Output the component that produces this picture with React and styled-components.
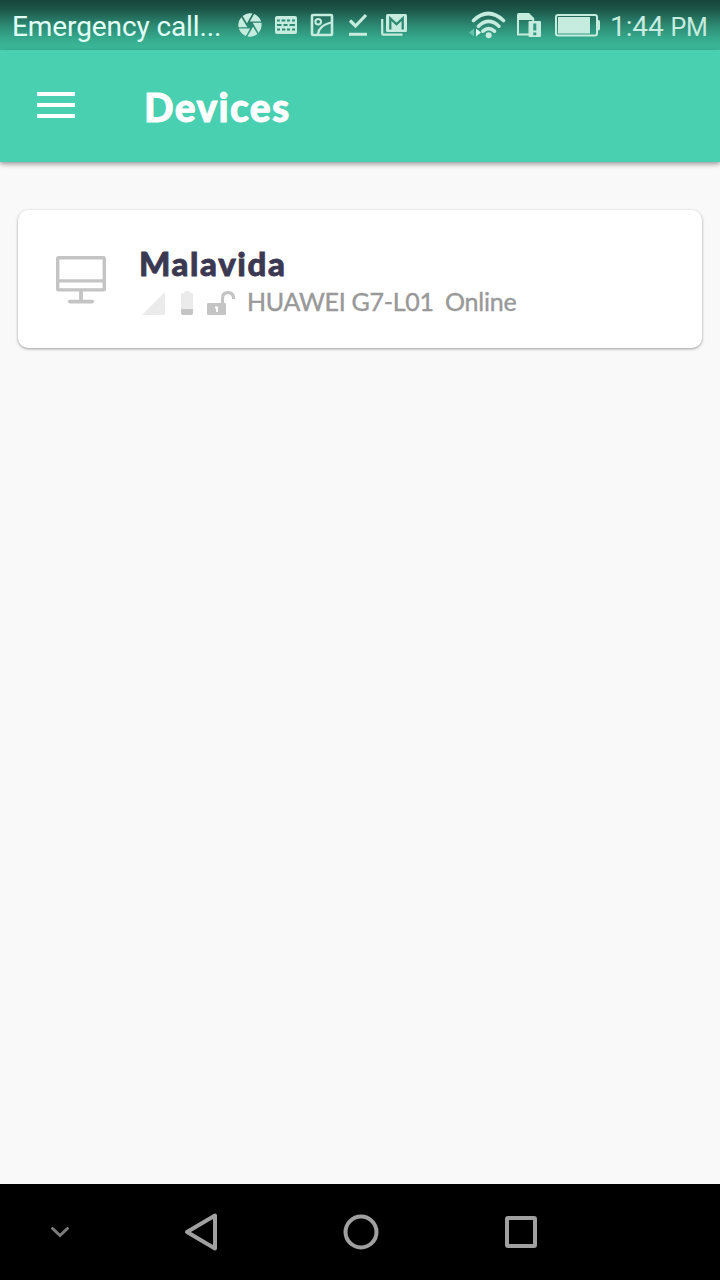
import React from "react";
import styled, { createGlobalStyle } from "styled-components";
import { MdCamera } from "react-icons/md";

const App = () => {
	return (
		<Screen>
			<GlobalStyle />
			<StatusBar>
				<Carrier>Emergency call...</Carrier>
				<Notifications>
					<MdCamera size={28} />
					<KeyboardIcon />
					<PictureIcon />
					<DoneIcon />
					<MailIcon />
				</Notifications>
				<SystemIcons>
					<WifiIcon />
					<SimIcon />
					<BatteryIcon />
				</SystemIcons>
				<Clock>
					1:44 <small>PM</small>
				</Clock>
			</StatusBar>
			<AppBar>
				<MenuButton aria-label="Menu">
					<span />
					<span />
					<span />
				</MenuButton>
				<Title>Devices</Title>
			</AppBar>
			<Content>
				<DeviceCard name="Malavida" model="HUAWEI G7-L01" status="Online" />
			</Content>
			<NavBar>
				<NavIcons />
			</NavBar>
		</Screen>
	);
};

const DeviceCard = ({ name, model, status }) => (
	<Card>
		<MonitorIcon />
		<DeviceInfo>
			<DeviceName>{name}</DeviceName>
			<DeviceDetails>
				<DeviceStateIcons />
				<Model>{model}</Model>
				<Status>{status}</Status>
			</DeviceDetails>
		</DeviceInfo>
	</Card>
);

const KeyboardIcon = () => (
	<svg width="24" height="18" viewBox="0 0 24 18">
		<rect x="1" y="0" width="22" height="18" rx="2" fill="currentColor" />
		<path
			d="M3 4.500h2.800M7.500 4.500h3.800M13 4.500h3M18 4.500h3M3 9h4.500M9.500 9h4M15.500 9h5.500M3 13.500h3M8 13.500h3.300M13 13.500h3M18 13.500h3"
			stroke="#2c8b73"
			strokeWidth="2.2"
		/>
	</svg>
);

const PictureIcon = () => (
	<svg width="24" height="24" viewBox="0 0 24 24" fill="none" stroke="currentColor">
		<rect x="2" y="2" width="20" height="20" rx="1" strokeWidth="2.600" />
		<circle cx="8.2" cy="8.8" r="2.8" strokeWidth="2" />
		<path d="M8 21c.5-5 4.500-9.500 13-11.500" strokeWidth="2.200" />
	</svg>
);

const DoneIcon = () => (
	<svg width="20" height="24" viewBox="0 0 20 24" fill="none" stroke="currentColor">
		<path d="M2 7.500l5.500 5.500L18 2" strokeWidth="3.200" />
		<path d="M1 21.300h18" strokeWidth="3" />
	</svg>
);

const MailIcon = () => (
	<svg width="28" height="24" viewBox="0 0 28 24" fill="none">
		<path d="M2.200 6v14.500q0 1.200 1.200 1.200H22.500" stroke="currentColor" strokeWidth="2.200" />
		<rect x="6" y="1" width="21" height="18" rx="1.500" fill="currentColor" />
		<path d="M10.300 16.500V5.500l6.200 5.800 6.200-5.800v11" stroke="#2b8972" strokeWidth="2.300" />
	</svg>
);

const WifiIcon = () => (
	<svg width="38" height="28" viewBox="0 0 38 28" fill="none">
		<path
			d="M4.500 9.500q14.500-14 30 0M9.500 15.200q10.200-9.500 20.400 0M14 20.200q5.700-5 11.400 0"
			stroke="currentColor"
			strokeWidth="3.600"
			strokeLinecap="round"
		/>
		<circle cx="19.700" cy="24.300" r="3" fill="currentColor" />
		<path d="M5 17.500v8L0 21.500z" fill="#65c3aa" />
		<path d="M7 17.500v8l5-4z" fill="#e2fff5" />
	</svg>
);

const SimIcon = () => (
	<svg width="26" height="26" viewBox="0 0 26 26">
		<path d="M1 3q0-2 2-2h10l5 5v2H1z" fill="currentColor" />
		<path d="M2 7v15.500h11M17.200 6v4" fill="none" stroke="currentColor" strokeWidth="2" />
		<rect x="12.500" y="9" width="12.500" height="16" rx="1" fill="currentColor" />
		<path d="M18.800 11.500v7M18.800 20.500v2.800" stroke="#329a80" strokeWidth="3" />
	</svg>
);

const BatteryIcon = () => (
	<svg width="46" height="24" viewBox="0 0 46 24">
		<rect x="1" y="2" width="41" height="20.500" rx="2" fill="none" stroke="currentColor" strokeWidth="2" />
		<path d="M42.500 7h1q1.500 0 1.500 2v6.500q0 2-1.500 2h-1z" fill="currentColor" />
		<rect x="3" y="4" width="32" height="16.500" fill="currentColor" />
	</svg>
);

const MonitorIcon = () => (
	<svg width="50" height="48" viewBox="0 0 50 48" fill="none" stroke="#c4c4c4">
		<rect x="1.700" y="1.700" width="46.600" height="32.200" rx=".8" strokeWidth="3.400" />
		<path d="M2 24.800h46" strokeWidth="3.200" />
		<path d="M25 34v11" strokeWidth="3.800" />
		<path d="M13.700 45.600h22.600" strokeWidth="3.600" strokeLinecap="round" />
	</svg>
);

// signal strength, battery level and lock state
const DeviceStateIcons = () => (
	<svg width="96" height="26" viewBox="0 0 96 26">
		<path d="M2 25L25 2v23z" fill="#ebebeb" />
		<path d="M41 19V4q0-1 1-1h2q0-2 2-2h2q2 0 2 2h2q1 0 1 1v15z" fill="#ebebeb" />
		<path d="M41 19h12v4q0 2-2 2h-8q-2 0-2-2z" fill="#c4c4c4" />
		<rect x="67" y="13" width="19" height="12" rx="1.200" fill="#c4c4c4" />
		<path
			d="M82.500 14V8.500q0-5.800 5.500-5.800 5.700 0 5.700 6.300"
			fill="none"
			stroke="#c4c4c4"
			strokeWidth="3.200"
		/>
		<path d="M75 16.500h3V22h-2v-3.500h-1z" fill="#fff" />
	</svg>
);

const NavIcons = () => (
	<svg width="720" height="96" viewBox="0 0 720 96" fill="none" stroke="#a0a0a0" strokeWidth="4">
		<path d="M52.500 44.500l7.500 7 7.500-7" stroke="#7c7c7c" strokeWidth="3" strokeLinecap="round" />
		<path d="M187 48l28-16.500v33z" strokeLinejoin="round" />
		<circle cx="361" cy="48" r="15.500" />
		<rect x="507" y="34" width="28" height="28" rx="1" />
	</svg>
);

const GlobalStyle = createGlobalStyle`
	* {
		box-sizing: border-box;
	}
	body {
		margin: 0;
		background: #f9f9f9;
	}
	svg {
		display: block;
		flex-shrink: 0;
	}
`;

const Screen = styled.div`
	display: flex;
	flex-direction: column;
	width: 720px;
	height: 1280px;
	overflow: hidden;
	background: #f9f9f9;
	font-family: Lato, sans-serif;
	white-space: nowrap;
`;

const StatusBar = styled.header`
	display: flex;
	align-items: center;
	height: 50px;
	padding-left: 12px;
	color: #c6ebdf;
	font-family: Roboto, sans-serif;
	background: linear-gradient(#17443a, #1c5548 18%, #2c8871 50%, #36ab8e 78%, #3bbb9b);
`;

const Carrier = styled.span`
	width: 224px;
	padding-top: 3px;
	font-size: 28px;
	letter-spacing: -0.1px;
	color: #e0fff6;
`;

const Notifications = styled.div`
	display: flex;
	align-items: center;
	width: 233px;
	svg {
		margin-right: 12px;
	}
	svg:first-child {
		margin-right: 10px;
	}
	svg:nth-child(4) {
		margin-left: 2px;
	}
`;

const SystemIcons = styled.div`
	display: flex;
	align-items: center;
	column-gap: 9px;
	width: 141px;
	svg:last-child {
		margin-left: 4px;
	}
`;

const Clock = styled.time`
	padding-top: 3px;
	font-size: 28px;
	letter-spacing: -0.1px;
	small {
		font-size: 25px;
	}
`;

const AppBar = styled.div`
	display: flex;
	align-items: center;
	height: 112px;
	padding: 0 0 2px 37px;
	color: #fff;
	background: #49d0b0;
	box-shadow: 0 2px 5px rgba(0, 0, 0, 0.4);
`;

const MenuButton = styled.button`
	display: flex;
	flex-direction: column;
	row-gap: 7px;
	width: 38px;
	padding: 0;
	border: 0;
	background: none;
	span {
		height: 4px;
		width: 38px;
		background: #fff;
	}
`;

const Title = styled.h1`
	margin: 4px 0 0 69px;
	font-size: 39px;
	font-weight: 900;
	letter-spacing: 1.3px;
	-webkit-text-stroke: 0.8px #fff;
`;

const Content = styled.main`
	flex: 1;
	padding: 48px 18px;
`;

const Card = styled.article`
	display: flex;
	align-items: center;
	height: 138px;
	padding: 2px 0 0 38px;
	border-radius: 10px;
	background: #fff;
	box-shadow: 0 1px 3px rgba(0, 0, 0, 0.38);
`;

const DeviceInfo = styled.div`
	margin-left: 34px;
	padding-top: 3px;
`;

const DeviceName = styled.h2`
	margin: 0 0 0 -1px;
	font-size: 33px;
	line-height: 39px;
	font-weight: 900;
	letter-spacing: 1.6px;
	color: #3b3852;
	-webkit-text-stroke: 0.8px #3b3852;
`;

const DeviceDetails = styled.div`
	display: flex;
	align-items: center;
	height: 36px;
	color: #999;
	font-size: 25px;
	-webkit-text-stroke: 0.4px #999;
	svg {
		margin-top: 4px;
	}
`;

const Model = styled.span`
	width: 198px;
	margin-left: 11px;
	letter-spacing: -0.3px;
`;

const Status = styled.span`
	letter-spacing: -0.2px;
`;

const NavBar = styled.nav`
	height: 96px;
	background: #000;
`;

export default App;
